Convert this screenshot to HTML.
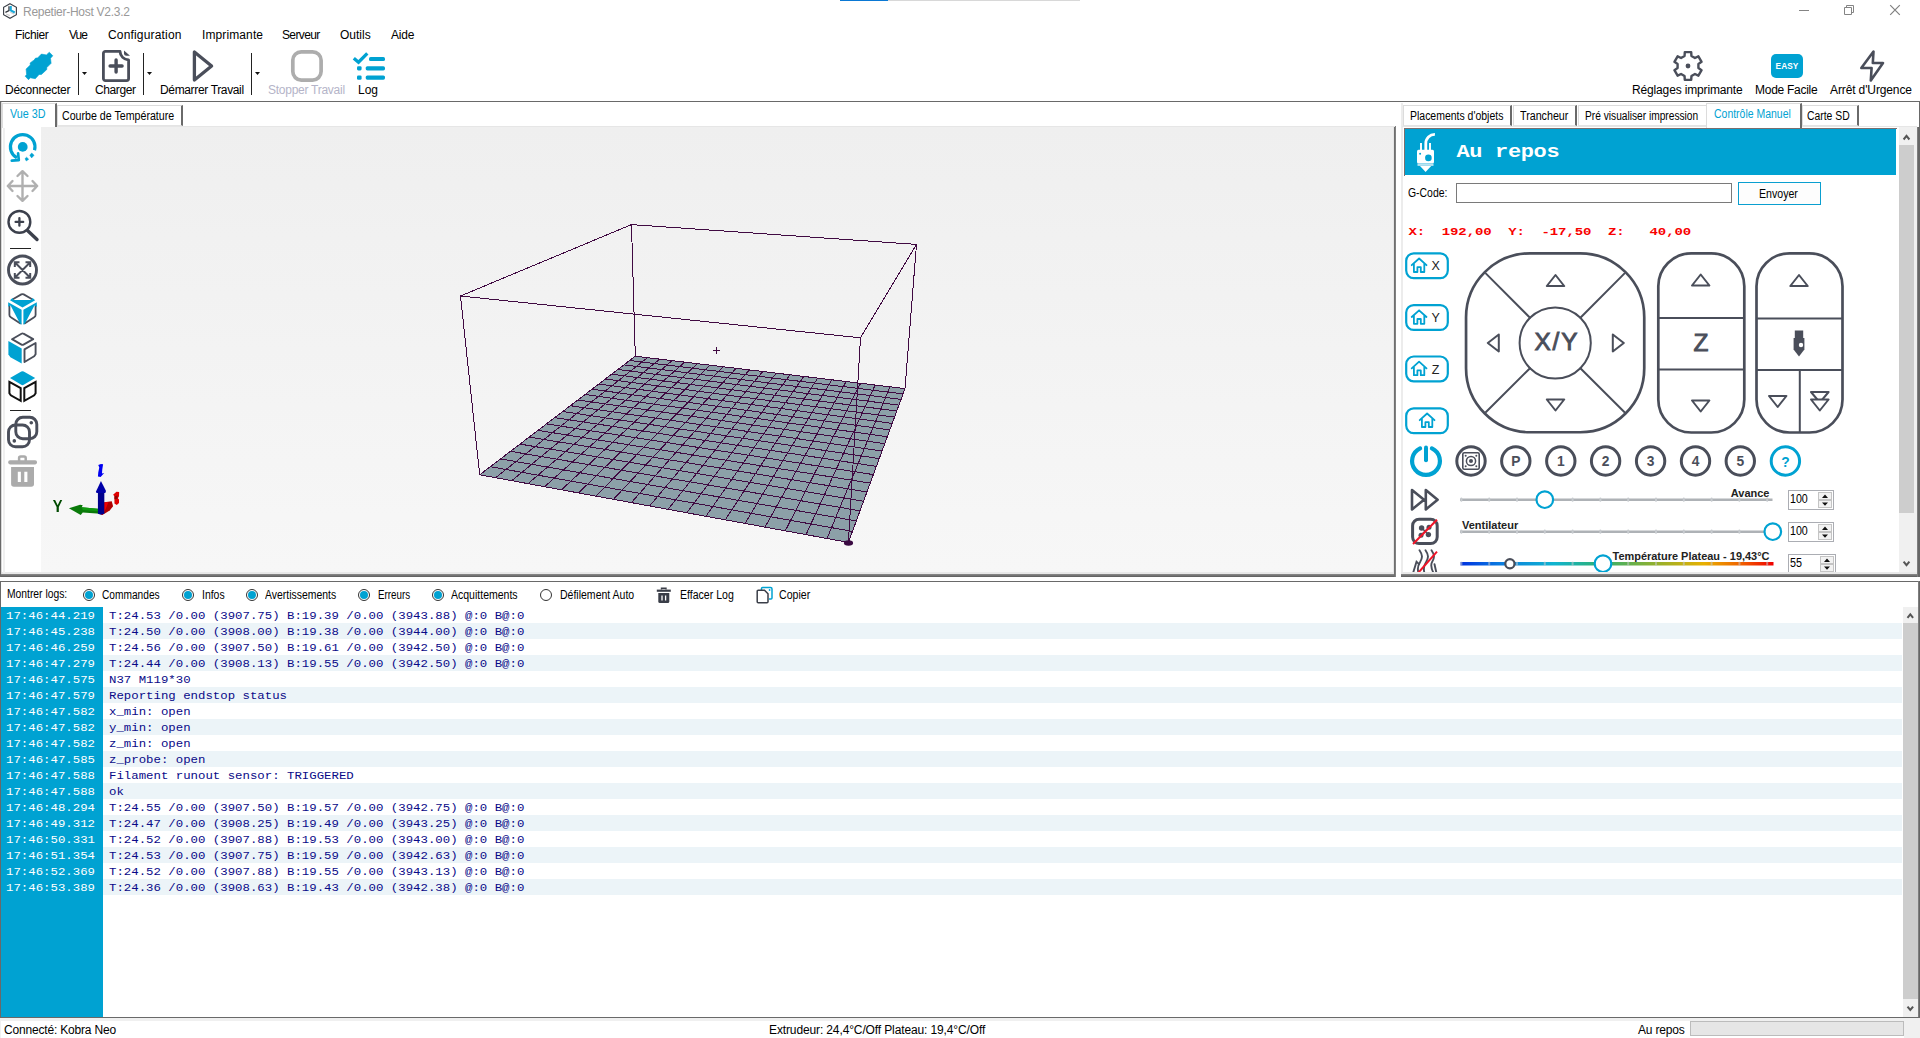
<!DOCTYPE html>
<html><head><meta charset="utf-8"><title>Repetier-Host V2.3.2</title>
<style>
*{box-sizing:border-box;margin:0;padding:0}
html,body{width:1920px;height:1038px;overflow:hidden;background:#fff}
body{position:relative;font-family:"Liberation Sans",sans-serif;font-size:12px;color:#000}
.a{position:absolute;white-space:nowrap}
.t12{font-size:12px;line-height:14px}
.ms{font-size:12.5px;line-height:14px;transform-origin:0 0}
.mono{font-family:"Liberation Mono",monospace}
.cy{color:#00a2d2}
svg{position:absolute;overflow:visible}
.ic{fill:none;stroke:#4a4e5a;stroke-width:2;stroke-linecap:round;stroke-linejoin:round}
.tab{position:absolute;background:#fff;border:1px solid #dcdcdc;border-right:2px solid #6a6a6a;border-bottom:1px solid #e4e4e4;height:21px;top:105px}
.row{position:absolute;left:103px;width:1798.5px;height:16px}
.row.alt{background:#ecf4f8}
.lt{position:absolute;left:6px;color:#fff;font-family:"Liberation Mono",monospace;font-size:12.36px;line-height:16px;white-space:nowrap;transform:translateY(0.5px) scaleY(0.84);transform-origin:0 11.5px}
.lm{position:absolute;left:109px;color:#0a0a88;font-family:"Liberation Mono",monospace;font-size:12.36px;line-height:16px;white-space:pre;transform:translateY(0.5px) scaleY(0.84);transform-origin:0 11.5px}
.nb{position:absolute;left:1788px;width:46px;height:20px;border:1px solid #abadb3;background:#fff}
.rb{position:absolute;width:12px;height:12px;border-radius:50%;border:1px solid #333;background:#fff}
.rb.on::after{content:"";position:absolute;left:1px;top:1px;width:8px;height:8px;border-radius:50%;background:#00a2d2}
</style></head><body>
<!-- title bar -->
<div class="a" style="left:840px;top:0;width:240px;height:1px;background:#d8d8d8"></div>
<div class="a" style="left:840px;top:0;width:48px;height:1px;background:#0a78d4"></div>
<svg style="left:3px;top:3px" width="15" height="16" viewBox="0 0 15 16"><path d="M7 0.7 L13.4 4.3 V11.7 L7 15.3 L0.6 11.7 V4.3 Z" fill="#fff" stroke="#3c4048" stroke-width="1.15"/><path d="M3.2 11 L6.8 12.6 M7.4 9.2 L11 11" stroke="#cfcfcf" stroke-width="1.2"/><path d="M6 3.2 V7.6 L2.4 9.4" fill="none" stroke="#30343c" stroke-width="1.3"/><path d="M7.8 3 V7.4 L11.8 9.5" fill="none" stroke="#1aa8d8" stroke-width="2"/></svg>
<div class="a t12" style="left:23px;top:5px;color:#999;letter-spacing:-0.27px">Repetier-Host V2.3.2</div>
<svg style="left:1799px;top:4px" width="12" height="12"><path d="M0 6.5 H10" stroke="#848484" stroke-width="1"/></svg>
<svg style="left:1844px;top:4px" width="12" height="12"><path d="M0.5 3.5 H7.5 V10.5 H0.5 Z M2.5 3.5 V1.5 H9.5 V8.5 H7.5" fill="none" stroke="#848484" stroke-width="1"/></svg>
<svg style="left:1889px;top:4px" width="12" height="12"><path d="M1.2 1.2 L10.8 10.8 M10.8 1.2 L1.2 10.8" stroke="#808080" stroke-width="1.2"/></svg>
<!-- menu -->
<div class="a t12" style="left:15px;top:28px;letter-spacing:-0.37px">Fichier</div>
<div class="a t12" style="left:69px;top:28px;letter-spacing:-1.05px">Vue</div>
<div class="a t12" style="left:108px;top:28px;letter-spacing:0.17px">Configuration</div>
<div class="a t12" style="left:202px;top:28px;letter-spacing:0.11px">Imprimante</div>
<div class="a t12" style="left:282px;top:28px;letter-spacing:-0.63px">Serveur</div>
<div class="a t12" style="left:340px;top:28px">Outils</div>
<div class="a t12" style="left:391px;top:28px;letter-spacing:-0.23px">Aide</div>
<!-- toolbar -->
<div class="a t12" style="left:5px;top:83px;letter-spacing:-0.26px">Déconnecter</div>
<div class="a t12" style="left:95px;top:83px;letter-spacing:-0.38px">Charger</div>
<div class="a t12" style="left:160px;top:83px;letter-spacing:-0.35px">Démarrer Travail</div>
<div class="a t12" style="left:268px;top:83px;color:#b4b4c8;letter-spacing:-0.26px">Stopper Travail</div>
<div class="a t12" style="left:358px;top:83px">Log</div>
<div class="a t12" style="left:1632px;top:83px;letter-spacing:-0.15px">Réglages imprimante</div>
<div class="a t12" style="left:1755px;top:83px;letter-spacing:-0.27px">Mode Facile</div>
<div class="a t12" style="left:1830px;top:83px;letter-spacing:-0.12px">Arrêt d'Urgence</div>
<div class="a" style="left:78px;top:53px;width:1px;height:42px;background:#222"></div>
<div class="a" style="left:143px;top:53px;width:1px;height:42px;background:#222"></div>
<div class="a" style="left:251px;top:53px;width:1px;height:42px;background:#222"></div>
<svg style="left:82px;top:72px" width="7" height="4"><path d="M0 0 H5 L2.5 3 Z" fill="#111"/></svg>
<svg style="left:147px;top:72px" width="7" height="4"><path d="M0 0 H5 L2.5 3 Z" fill="#111"/></svg>
<svg style="left:255px;top:72px" width="7" height="4"><path d="M0 0 H5 L2.5 3 Z" fill="#111"/></svg>
<!-- toolbar icons -->
<svg id="ic-disc" style="left:16px;top:46px" width="50" height="40" viewBox="0 0 50 40"><path d="M33.3 6.2 L36.8 9.8 L34.5 12.3 L35.1 17.3 L30.8 21.6 L30.8 23.5 L25.4 28.5 L23.1 28.5 L19.3 32.7 L14.3 31.8 L12.5 33.7 L9.2 30.2 L10.6 28.5 L10.1 23.1 L14.3 18.9 L14.1 17.1 L16.4 15.2 L17.9 14.3 L19.6 12.1 L21.6 11.9 L25.4 8.1 L30.4 8.9 Z" fill="#00a2d2" stroke="#00a2d2" stroke-width="0.6" stroke-linejoin="round"/></svg>
<svg id="ic-load" style="left:100px;top:48px" width="34" height="38" viewBox="0 0 34 38"><path d="M5.4 3.4 H20 A9 9 0 0 0 28.6 12 V30.6 a2 2 0 0 1 -2 2 H5.4 a2 2 0 0 1 -2 -2 V5.4 a2 2 0 0 1 2 -2 Z" fill="none" stroke="#4a4e5a" stroke-width="2.8" stroke-linejoin="round"/><path d="M16.1 12 V24 M10.1 18 H22.1" stroke="#4a4e5a" stroke-width="3.4" stroke-linecap="round"/><path d="M24 2.6 L30 7.8 H26.5 A2.5 2.5 0 0 1 24 5.3 Z" fill="#4a4e5a"/></svg>
<svg id="ic-play" style="left:190px;top:48px" width="28" height="38" viewBox="0 0 28 38"><path d="M4.4 4 V32 L21.6 18 Z" fill="none" stroke="#4a4e5a" stroke-width="3.3" stroke-linejoin="round"/></svg>
<svg id="ic-stop" style="left:289px;top:48px" width="36" height="36" viewBox="0 0 36 36"><rect x="3.8" y="3.8" width="28.3" height="28.3" rx="8.5" fill="none" stroke="#adadad" stroke-width="3.7"/></svg>
<svg id="ic-log" style="left:350px;top:48px" width="38" height="36" viewBox="0 0 38 36"><path d="M3.8 10.2 L8.5 14.2 L17.3 5.4" fill="none" stroke="#00a2d2" stroke-width="3.3"/><g fill="#00a2d2"><rect x="19" y="9" width="16" height="4.1" rx="1.6"/><rect x="15.7" y="18.2" width="19.3" height="4.2" rx="1.6"/><rect x="15.7" y="27.4" width="19.3" height="4.3" rx="1.6"/><rect x="7" y="18.2" width="4.6" height="4.2" rx="1.3"/><rect x="7" y="27.4" width="4.6" height="4.3" rx="1.3"/></g></svg>
<svg id="ic-gear" style="left:1670px;top:48px" width="36" height="36" viewBox="0 0 36 36"><path d="M14.55 7.98 L14.81 4.16 L21.19 4.16 L21.45 7.98 L24.95 10.00 L28.39 8.32 L31.58 13.85 L28.41 15.98 L28.41 20.02 L31.58 22.15 L28.39 27.68 L24.95 26.00 L21.45 28.02 L21.19 31.84 L14.81 31.84 L14.55 28.02 L11.05 26.00 L7.61 27.68 L4.42 22.15 L7.59 20.02 L7.59 15.98 L4.42 13.85 L7.61 8.32 L11.05 10.00 Z" fill="none" stroke="#4a4e5a" stroke-width="2.4" stroke-linejoin="round"/><circle cx="18" cy="18" r="2.4" fill="#4a4e5a"/></svg>
<div class="a" style="left:1771px;top:54px;width:32px;height:24px;border-radius:5px;background:#00a2d2"></div>
<div class="a" style="left:1771px;top:61px;width:32px;text-align:center;color:#fff;font-size:8.3px;font-weight:bold;line-height:10px;letter-spacing:0.1px">EASY</div>
<svg id="ic-bolt" style="left:1856px;top:46px" width="32" height="40" viewBox="0 0 32 40"><path d="M17.5 5.5 L5.3 22 H15.6 L14.8 34.5 L27 17 H16.8 Z" fill="none" stroke="#4a4e5a" stroke-width="2.6" stroke-linejoin="round"/></svg>
<div class="a" style="left:0;top:101px;width:1920px;height:1px;background:#696969"></div>
<!-- left panel -->
<div class="a" style="left:0;top:101px;width:1px;height:476px;background:#696969"></div>
<div class="a" style="left:1px;top:102px;width:1px;height:472px;background:#d8d8d8"></div>
<div class="a" style="left:2px;top:572px;width:1392px;height:2px;background:#e9e9e9"></div>
<div class="a" style="left:1px;top:574px;width:1395px;height:3px;background:linear-gradient(#8c8c8c,#5c5c5c)"></div>
<div class="a" style="left:1393px;top:127px;width:1px;height:447px;background:#e6e6e6"></div><div class="a" style="left:1394px;top:126px;width:2px;height:451px;background:linear-gradient(90deg,#666,#8a8a8a)"></div>
<!-- tabs left -->
<div class="a" style="left:2px;top:126px;width:1393px;height:1px;background:#e6e6e6"></div>
<div class="tab" style="left:57px;width:126px"></div><div class="a ms" style="left:61.9px;transform:scaleX(0.8513);top:109px">Courbe de Température</div>
<div class="tab" style="left:2px;top:103px;width:55px;height:25px;border-bottom:none"></div><div class="a ms cy" style="left:10.4px;transform:scaleX(0.8621);top:107px">Vue 3D</div>
<div class="a" style="left:3px;top:128px;width:2px;height:445px;background:#f0f0f0"></div>
<!-- 3d view -->
<div class="a" id="view3d" style="left:41px;top:127px;width:1352px;height:445px;background:linear-gradient(#efefef,#f7f7f7);overflow:hidden">
<svg class="v3d" width="1354" height="447" viewBox="0 0 1354 447" shape-rendering="crispEdges">
<path d="M594.3 229.2 L864.0 261.6 L807.4 415.4 L438.7 347.8 Z" fill="#8ca0a8"/>
<path d="M594.3 229.2 L438.7 347.8 M594.3 229.2 L864.0 261.6 M606.4 230.7 L454.6 350.7 M588.7 233.5 L862.0 266.9 M618.7 232.1 L470.7 353.7 M582.8 237.9 L860.0 272.4 M631.1 233.6 L487.0 356.7 M576.9 242.5 L857.9 278.1 M643.7 235.1 L503.6 359.7 M570.7 247.2 L855.7 284.0 M656.3 236.7 L520.5 362.8 M564.3 252.0 L853.5 290.1 M669.1 238.2 L537.6 365.9 M557.8 257.0 L851.2 296.4 M682.1 239.7 L554.9 369.1 M551.0 262.2 L848.8 302.9 M695.2 241.3 L572.5 372.3 M544.0 267.5 L846.3 309.7 M708.4 242.9 L590.4 375.6 M536.8 273.0 L843.7 316.7 M721.8 244.5 L608.6 379.0 M529.4 278.7 L841.0 324.0 M735.3 246.1 L627.1 382.3 M521.7 284.5 L838.3 331.6 M749.0 247.8 L645.9 385.8 M513.7 290.6 L835.4 339.4 M762.8 249.4 L664.9 389.3 M505.5 296.9 L832.4 347.6 M776.7 251.1 L684.3 392.8 M497.0 303.4 L829.2 356.1 M790.9 252.8 L704.0 396.4 M488.1 310.1 L826.0 364.9 M805.2 254.5 L724.0 400.1 M479.0 317.1 L822.6 374.2 M819.6 256.3 L744.3 403.8 M469.5 324.3 L819.0 383.8 M834.2 258.0 L765.0 407.6 M459.6 331.9 L815.3 393.9 M849.0 259.8 L786.0 411.5 M449.4 339.7 L811.5 404.4 M864.0 261.6 L807.4 415.4 M438.7 347.8 L807.4 415.4" fill="none" stroke="#400a42" stroke-width="1"/>
<path d="M590.5 97.6 L875.5 117.4 L819.5 210.8 L419.5 169.0 Z M594.3 229.2 L590.5 97.6 M864.0 261.6 L875.5 117.4 M807.4 415.4 L819.5 210.8 M438.7 347.8 L419.5 169.0" fill="none" stroke="#400a42" stroke-width="1"/>
<ellipse cx="807.5" cy="416" rx="4.6" ry="2.8" fill="#3a0a42" shape-rendering="geometricPrecision"/>
<path d="M672 223.5 h7 M675.5 220 v7" stroke="#400a42" stroke-width="1"/>
</svg><svg id="gizmo" style="left:4px;top:328px" width="90" height="70" viewBox="0 0 1335 1038">
<path d="M118 668 L150 668 L188 745 L225 668 L255 668 L205 770 L205 845 L172 845 L172 770 Z" fill="#004a00"/>
<path d="M355 790 L520 738 L560 745 L545 775 L820 800 L820 872 L560 852 L530 890 Z" fill="#0a7a0a"/>
<path d="M545 775 L820 800 L820 835 L560 815 Z" fill="#0f9a0f"/>
<path d="M880 700 L990 685 L1010 760 L960 822 L850 888 L820 872 L820 800 Z" fill="#b00000"/>
<path d="M880 700 L940 700 L900 800 L850 888 L820 872 Z" fill="#f00000"/>
<path d="M1010 590 L1060 545 L1100 548 L1098 610 L1080 640 L1098 660 L1098 710 L1065 740 L1030 720 L1030 610 Z" fill="#e00000"/>
<path d="M1030 610 L1075 600 L1075 650 L1030 655 Z" fill="#900000"/>
<path d="M785 550 L880 550 L880 870 L830 885 L785 870 Z" fill="#00008c"/>
<path d="M830 385 L905 535 L895 565 L765 565 L755 545 Z" fill="#0000a8"/>
<path d="M790 150 L830 133 L862 138 L850 210 L845 275 L878 268 L825 325 L785 318 L790 260 L805 185 Z" fill="#0000f0"/>
</svg>
</div>
<!-- left tool icons -->
<svg id="t-rot" style="left:4px;top:128px" width="40" height="40" viewBox="0 0 40 40"><path d="M30.52 22.29 A12.3 12.3 0 1 0 12.93 29.76" fill="none" stroke="#00a2d2" stroke-width="3.2"/><circle cx="18.7" cy="18.9" r="4.9" fill="#00a2d2"/><path d="M14.1 25.4 L14.8 32.2 L7.8 32.7" fill="none" stroke="#00a2d2" stroke-width="2.7" stroke-linecap="round" stroke-linejoin="round"/><path d="M27.7 25 L30.1 27.3 L27.6 29.9 L25.8 27.2 Z M22.6 29.2 L24.7 31.2 L22.3 33 L21 30.7 Z" fill="#00a2d2" stroke="#00a2d2" stroke-width="0.5" stroke-linejoin="round"/></svg>
<svg id="t-move" style="left:7px;top:170px" width="32" height="32" viewBox="0 0 32 32"><path d="M15.5 1.5 V30.5 M1 16 H30 M10.5 6 L15.5 1.2 L20.5 6 M10.5 26 L15.5 30.8 L20.5 26 M5.5 11 L0.8 16 L5.5 21 M25.5 11 L30.2 16 L25.5 21" fill="none" stroke="#b0b0b0" stroke-width="2.4" stroke-linecap="round" stroke-linejoin="round"/></svg>
<svg id="t-zoom" style="left:6px;top:208px" width="34" height="34" viewBox="0 0 34 34"><circle cx="13.4" cy="13.9" r="10.9" fill="none" stroke="#3c404c" stroke-width="2.4"/><path d="M21.5 22.5 L31 31.5" stroke="#3c404c" stroke-width="3.4" stroke-linecap="round"/><path d="M9.6 13.9 H17.2 M13.4 10.1 V17.7" stroke="#3c404c" stroke-width="2.3" stroke-linecap="round"/></svg>
<div class="a" style="left:10px;top:248px;width:21px;height:1px;background:#222"></div>
<svg id="t-fit" style="left:6px;top:254px" width="33" height="33" viewBox="0 0 33 33"><circle cx="16.5" cy="16" r="14" fill="none" stroke="#4a4e5a" stroke-width="2.9"/><path d="M9 8.5 L24 23.5 M24 8.5 L9 23.5 M8.8 13 V8.3 H13.5 M19.5 8.3 H24.2 V13 M24.2 19 V23.7 H19.5 M13.5 23.7 H8.8 V19" fill="none" stroke="#4a4e5a" stroke-width="2"/></svg>
<svg id="t-c1" style="left:4px;top:290px" width="40" height="40" viewBox="0 0 40 40"><g fill="none" stroke="#4a4e5a" stroke-width="1.8" stroke-linejoin="round" stroke-linecap="round"><path d="M9.3 9 L17.3 4.4 Q18.5 3.7 19.7 4.4 L27.7 9"/><path d="M5.4 16 V25 Q5.4 26.5 6.8 27.3 L16.4 33.4"/><path d="M31.6 16 V25 Q31.6 26.5 30.2 27.3 L20.6 33.4"/></g><g fill="#00a2d2"><path d="M6 10.2 L8.5 8 L9.7 9.9 H27.3 L28.6 8 L31.2 10.2 L18.5 17.4 Z"/><path d="M4.2 12.3 L17.6 19.7 V34.8 L16 33.5 L6.6 15.6 L4.2 16.8 Z"/><path d="M32.8 12.3 L19.4 19.7 V34.8 L21 33.5 L30.4 15.6 L32.8 16.8 Z"/></g></svg>
<svg id="t-c2" style="left:4px;top:328px" width="40" height="40" viewBox="0 0 40 40"><path d="M4.4 13.1 L17.7 20.4 V35.6 L6.4 29.3 L4.4 26.6 Z" fill="#00a2d2"/><g fill="none" stroke="#4a4e5a" stroke-width="1.9" stroke-linejoin="round"><path d="M8 11.2 L17.5 5.7 Q18.5 5.1 19.5 5.7 L29.2 11.2 L19.5 16.6 Q18.5 17.2 17.5 16.6 Z"/><path d="M20.5 21.4 L31.6 15 V26.3 L30.2 28.3 L20.5 34 Z"/></g></svg>
<svg id="t-c3" style="left:4px;top:366px" width="40" height="40" viewBox="0 0 40 40"><path d="M6 12.1 L17.3 5.6 Q18.5 4.9 19.7 5.6 L31.2 12.1 L19.7 18.8 Q18.5 19.5 17.3 18.8 Z" fill="#00a2d2"/><g fill="none" stroke="#111" stroke-width="2" stroke-linejoin="miter"><path d="M5.4 15.9 L16.7 22.2 V34.8 L6.8 29.3 L5.4 27.3 Z"/><path d="M31.6 15.9 L20.3 22.2 V34.8 L30.2 29.3 L31.6 27.3 Z"/></g></svg>
<div class="a" style="left:10px;top:410px;width:21px;height:1px;background:#222"></div>
<svg id="t-copy" style="left:2px;top:412px" width="42" height="40" viewBox="0 0 42 40"><g fill="none" stroke="#4a4e5a" stroke-width="2.9"><rect x="13.8" y="5.3" width="21" height="21.4" rx="7"/><rect x="6.5" y="13" width="21" height="21.8" rx="7"/></g><circle cx="29.3" cy="10.8" r="1.8" fill="#4a4e5a"/><circle cx="12.3" cy="28.9" r="1.8" fill="#4a4e5a"/></svg>
<svg id="t-trash" style="left:2px;top:452px" width="42" height="40" viewBox="0 40 42 40"><path d="M17.1 49 V46 a1.6 1.6 0 0 1 1.6 -1.6 h3.4 a1.6 1.6 0 0 1 1.6 1.6 V49" fill="none" stroke="#ababab" stroke-width="2.5"/><rect x="6.2" y="48.2" width="28.8" height="4.2" rx="1.8" fill="#ababab"/><path d="M9.1 55.1 H32 V72 a2.8 2.8 0 0 1 -2.8 2.8 H11.9 a2.8 2.8 0 0 1 -2.8 -2.8 Z" fill="#ababab"/><path d="M15.8 59.7 H18.9 V70.1 H15.8 Z M22.3 59.7 H25.4 V70.1 H22.3 Z" fill="#fff"/></svg>
<!-- right panel -->
<div class="a" style="left:1399px;top:102px;width:1px;height:474px;background:#fff"></div>
<div class="a" style="left:1401px;top:103px;width:2px;height:471px;background:#ececec"></div>
<div class="a" style="left:1402px;top:126px;width:515px;height:1px;background:#e6e6e6"></div>
<div class="a" style="left:1401px;top:574px;width:519px;height:3px;background:linear-gradient(#8c8c8c,#5c5c5c)"></div>
<div class="a" style="left:1919px;top:101px;width:1px;height:476px;background:#696969"></div><div class="a" style="left:1917px;top:127px;width:3px;height:450px;background:linear-gradient(90deg,#8a8a8a,#666 50%)"></div>
<div class="tab" style="left:1403px;width:109px"></div><div class="a ms" style="left:1409.5px;transform:scaleX(0.8378);top:109px">Placements d'objets</div>
<div class="tab" style="left:1513px;width:64px"></div><div class="a ms" style="left:1520.0px;transform:scaleX(0.8564);top:109px">Trancheur</div>
<div class="tab" style="left:1578px;width:130px"></div><div class="a ms" style="left:1584.5px;transform:scaleX(0.8148);top:109px">Pré visualiser impression</div>
<div class="tab" style="left:1802px;width:57px"></div><div class="a ms" style="left:1807.0px;transform:scaleX(0.8306);top:109px">Carte SD</div>
<div class="tab" style="left:1706px;top:103px;width:96px;height:25px;border-bottom:none"></div><div class="a ms cy" style="left:1714.2px;transform:scaleX(0.8373);top:107px">Contrôle Manuel</div>
<!-- header -->
<div class="a" style="left:1404px;top:128px;width:493px;height:48px;border-left:1px solid #7a6f6f;border-top:1px solid #7a6f6f"></div>
<div class="a" style="left:1405px;top:129px;width:491px;height:46px;background:#00a2d2"></div>
<svg id="hd-ext" style="left:1414px;top:130px" width="24" height="44" viewBox="0 0 24 44"><path d="M11.8 20 V13.5 A9 9 0 0 1 20.9 4.4" fill="none" stroke="#fff" stroke-width="2.8"/><path d="M7 13 V20 M16 13 V20" stroke="#fff" stroke-width="1.9"/><rect x="3" y="19.8" width="17" height="13.8" rx="1.5" fill="#fff"/><rect x="3.5" y="33.6" width="16" height="2.3" fill="#b8e4f2"/><path d="M6 35.9 H17.2 L11.6 42 Z" fill="#fff"/><circle cx="14.4" cy="27.9" r="3.3" fill="#00a2d2"/><circle cx="6.1" cy="23.7" r="1" fill="#00a2d2"/></svg>
<div class="a mono" id="aurepos" style="left:1456.5px;top:140px;font-size:22px;line-height:24px;font-weight:bold;color:#fff;letter-spacing:-0.35px;transform:scaleY(0.8);transform-origin:0 17.9px">Au repos</div>
<!-- gcode -->
<div class="a ms" style="left:1408.3px;transform:scaleX(0.8339);top:186px">G-Code:</div>
<div class="a" style="left:1456px;top:183px;width:276px;height:20px;border:1px solid #7a7a7a;background:#fff"></div>
<div class="a" style="left:1738px;top:182px;width:83px;height:23px;border:1px solid #0a9fd0;background:#fdfdfd"></div>
<div class="a ms" style="left:1758.8px;transform:scaleX(0.8482);top:187px">Envoyer</div>
<div class="a mono" id="coords" style="left:1408.5px;top:223px;font-size:14px;line-height:16px;font-weight:bold;color:#f80000;white-space:pre;letter-spacing:-0.09px;transform:scaleY(0.82);transform-origin:0 11.8px">X:  192,00  Y:  -17,50  Z:   40,00</div>
<!-- home buttons -->
<svg id="pads" style="left:1400px;top:240px" width="460" height="200" viewBox="0 0 460 200">
<defs><path id="home" d="M1.2 8.2 L8.6 1.5 L16 8.2 M3.4 6.8 V15 H6.9 V10.2 H10.3 V15 H13.8 V6.8" fill="none" stroke="#00a2d2" stroke-width="1.8" stroke-linejoin="round" stroke-linecap="round"/></defs>
<g fill="#fff" stroke="#00a2d2" stroke-width="2.2">
<rect x="6.2" y="13.3" width="41.6" height="24.8" rx="7.5"/><rect x="6.2" y="65.1" width="41.6" height="24.8" rx="7.5"/><rect x="6.2" y="116.5" width="41.6" height="24.8" rx="7.5"/><rect x="6.2" y="168.3" width="41.6" height="24.8" rx="7.5"/></g>
<use href="#home" x="10.5" y="17"/><use href="#home" x="10.5" y="68.8"/><use href="#home" x="10.5" y="120.2"/><use href="#home" x="18.5" y="172"/>
<g font-family="Liberation Sans, sans-serif" font-size="12.5" fill="#222"><text x="31.5" y="30.3">X</text><text x="31.5" y="82.1">Y</text><text x="31.8" y="133.5">Z</text></g>
<!-- XY pad -->
<g fill="none" stroke="#4a4e5a" stroke-linejoin="round" stroke-linecap="round">
<rect x="66.05" y="13.35" width="178.2" height="178.9" rx="64" stroke-width="2.7"/>
<circle cx="155.2" cy="103" r="35.6" stroke-width="2"/>
<path d="M86 33.6 L130 77.8 M224.3 33.6 L180.4 77.8 M86 172 L130 128.2 M224.3 172 L180.4 128.2" stroke-width="2"/>
<path d="M146.8 46 L155.5 35 L164.2 46 Z M146.8 159.5 L155.5 170.5 L164.2 159.5 Z M98.8 94.5 L87.8 103 L98.8 111.5 Z M212.8 94.5 L223.8 103 L212.8 111.5 Z" stroke-width="2"/>
<!-- Z pad -->
<rect x="258.3" y="13.3" width="86" height="179.2" rx="33" stroke-width="2.7"/>
<path d="M259 78 H343.5 M259 129.4 H343.5" stroke-width="2"/>
<path d="M292 45.5 L300.7 34.5 L309.4 45.5 Z M292 160.5 L300.7 171.5 L309.4 160.5 Z" stroke-width="2"/>
<!-- E pad -->
<rect x="356.5" y="13.3" width="86" height="179.2" rx="33" stroke-width="2.7"/>
<path d="M357 78.5 H442 M357 130 H442 M399.8 130 V192" stroke-width="2"/>
<path d="M390.3 46 L399 35 L407.7 46 Z M369 156 L377.7 167 L386.4 156 Z M411 152 H428.6 L419.8 162.5 Z" stroke-width="2"/><path d="M411 159.5 L419.8 170.5 L428.6 159.5 Z" stroke-width="2" fill="#fff"/>
</g>
<g font-family="Liberation Sans, sans-serif" fill="#4a4e5a" text-anchor="middle"><text x="156" y="110.4" font-size="24.4" stroke="#4a4e5a" stroke-width="0.9" textLength="43" lengthAdjust="spacing">X/Y</text><text x="301" y="110.6" font-size="24.4" stroke="#4a4e5a" stroke-width="0.9">Z</text></g>
<g fill="#4a4e5a"><rect x="394.8" y="90.5" width="8.4" height="7.5"/><path d="M393.6 98 H404.4 V109.5 L399 116.5 L393.6 109.5 Z"/><circle cx="401" cy="105" r="2.2" fill="#fff"/></g>
</svg>
<!-- circle buttons row -->
<svg id="circ" style="left:1405px;top:440px" width="420" height="42" viewBox="0 0 420 42">
<g fill="none" stroke="#00a2d2" stroke-width="4.2" stroke-linecap="round"><path d="M15.1 8.4 A13.9 13.9 0 1 0 26.9 8.4"/><path d="M21 7.4 V20.3" stroke-width="4"/></g>
<g fill="none" stroke="#4a4e5a" stroke-width="3"><circle cx="66" cy="21" r="14.2"/><circle cx="110.8" cy="21" r="14.2"/><circle cx="155.8" cy="21" r="14.2"/><circle cx="200.6" cy="21" r="14.2"/><circle cx="245.6" cy="21" r="14.2"/><circle cx="290.5" cy="21" r="14.2"/><circle cx="335.3" cy="21" r="14.2"/></g>
<circle cx="380.4" cy="21" r="14.2" fill="none" stroke="#00a2d2" stroke-width="3"/>
<g fill="none" stroke="#4a4e5a"><rect x="57.8" y="12.8" width="16.4" height="16.4" rx="1.5" stroke-width="1.6"/><circle cx="66" cy="21" r="4.6" stroke-width="1.5"/><circle cx="66" cy="21" r="2" fill="#4a4e5a" stroke="none"/></g>
<g fill="#4a4e5a"><circle cx="60.7" cy="15.7" r="1"/><circle cx="71.3" cy="15.7" r="1"/><circle cx="60.7" cy="26.3" r="1"/><circle cx="71.3" cy="26.3" r="1"/></g>
<g font-family="Liberation Sans, sans-serif" font-size="13.8" font-weight="bold" fill="#4a4e5a" text-anchor="middle"><text x="110.8" y="26">P</text><text x="155.8" y="26">1</text><text x="200.6" y="26">2</text><text x="245.6" y="26">3</text><text x="290.5" y="26">4</text><text x="335.3" y="26">5</text><text x="380.4" y="26.5" fill="#00a2d2">?</text></g>
</svg>
<!-- sliders -->
<svg id="sliders" style="left:1405px;top:484px;overflow:hidden" width="440" height="90" viewBox="0 -0.2 440 90">
<defs><linearGradient id="tg" gradientUnits="userSpaceOnUse" x1="55" x2="368" y1="0" y2="0"><stop offset="0" stop-color="#0030e0"/><stop offset="0.12" stop-color="#0a78e0"/><stop offset="0.3" stop-color="#10b4d0"/><stop offset="0.45" stop-color="#30b070"/><stop offset="0.62" stop-color="#90b030"/><stop offset="0.78" stop-color="#e8b000"/><stop offset="0.9" stop-color="#f06000"/><stop offset="1" stop-color="#f00000"/></linearGradient></defs>
<!-- row1 -->
<path d="M7 5.8 L19 15.5 L7 25.2 Z M20.8 5.8 L32.6 15.5 L20.8 25.2 Z" fill="none" stroke="#4a4e5a" stroke-width="2.6" stroke-linejoin="round"/>
<path d="M55 15.5 H367.5" stroke="#aeb2b6" stroke-width="2.6"/>
<path d="M55 47.5 H367.5" stroke="#aeb2b6" stroke-width="2.6"/>
<path d="M55.5 79.5 H368.5" stroke="url(#tg)" stroke-width="3.4"/>
<g fill="#c6cace" id="tk"><rect x="55.4" y="13.4" width="2" height="4.2" rx="1"/><rect x="83.2" y="13.4" width="2" height="4.2" rx="1"/><rect x="111.0" y="13.4" width="2" height="4.2" rx="1"/><rect x="138.8" y="13.4" width="2" height="4.2" rx="1"/><rect x="166.6" y="13.4" width="2" height="4.2" rx="1"/><rect x="194.4" y="13.4" width="2" height="4.2" rx="1"/><rect x="222.2" y="13.4" width="2" height="4.2" rx="1"/><rect x="250.0" y="13.4" width="2" height="4.2" rx="1"/><rect x="277.8" y="13.4" width="2" height="4.2" rx="1"/><rect x="305.6" y="13.4" width="2" height="4.2" rx="1"/><rect x="333.4" y="13.4" width="2" height="4.2" rx="1"/><rect x="361.2" y="13.4" width="2" height="4.2" rx="1"/></g>
<use href="#tk" y="32"/><use href="#tk" y="64" opacity="0.55"/>
<circle cx="139.8" cy="15.5" r="8.3" fill="#fff" stroke="#00a2d2" stroke-width="2.2"/>
<circle cx="367.8" cy="47.5" r="8.3" fill="#fff" stroke="#00a2d2" stroke-width="2.2"/>
<circle cx="104.9" cy="79.5" r="4.6" fill="#fff" stroke="#4a4e5a" stroke-width="2.2"/>
<circle cx="198" cy="79.5" r="8.3" fill="#fff" stroke="#00a2d2" stroke-width="2.2"/>
<!-- fan icon -->
<rect x="7.6" y="35" width="24.6" height="24.4" rx="6.5" fill="none" stroke="#4a4e5a" stroke-width="3"/>
<g fill="#4a4e5a"><circle cx="16.6" cy="43.8" r="2.7"/><circle cx="24" cy="43" r="2.5"/><circle cx="16" cy="51" r="2.5"/><circle cx="23.4" cy="50.4" r="2.7"/><path d="M17 44 L23 50 M23.5 43.5 L16.5 50.5" stroke="#4a4e5a" stroke-width="1.6"/></g>
<path d="M8 59.8 L32 35.5" stroke="#f01428" stroke-width="2"/>
<!-- bed heat icon -->
<g fill="none" stroke="#4a4e5a" stroke-width="1.9" stroke-linecap="round"><path d="M14.5 66 C18 71 17.5 74 15 78 C13 81 12 84 13.5 89"/><path d="M20.5 66 C24 71 23.5 74 21 78 C19 81 18 84 19.5 89"/><path d="M26.5 66 C30 71 29.5 74 27 78 C25.5 81 26 84 28.5 89"/><path d="M8 89 L11.5 77.5 L14 80 M31.5 89 L29.5 80"/></g>
<path d="M12 90 L32 67.5" stroke="#f01428" stroke-width="2"/>
<g font-family="Liberation Sans, sans-serif" font-size="11" font-weight="bold" fill="#222"><text x="364.5" y="12.6" text-anchor="end">Avance</text><text x="57" y="44.5">Ventilateur</text><text x="364.5" y="76" text-anchor="end" textLength="157" lengthAdjust="spacingAndGlyphs">Température Plateau - 19,43°C</text></g>
</svg>
<!-- numeric boxes -->
<div class="nb" style="top:490px"></div><div class="nb" style="top:522px"></div><div class="nb" style="top:554px;width:48px"></div>
<div class="a ms" style="left:1790.3px;transform:scaleX(0.8533);top:492px">100</div>
<div class="a ms" style="left:1790.3px;transform:scaleX(0.8533);top:524px">100</div>
<div class="a ms" style="left:1789.7px;transform:scaleX(0.8629);top:556px">55</div>
<svg style="left:1818px;top:492px" width="15" height="16"><rect x="0.5" y="0.5" width="13" height="7" fill="#f2f2f2" stroke="#c4c4c4"/><rect x="0.5" y="8.5" width="13" height="7" fill="#f2f2f2" stroke="#c4c4c4"/><path d="M4 6 L7 2.6 L10 6 Z M4 10.4 L7 13.8 L10 10.4 Z" fill="#111"/></svg>
<svg style="left:1818px;top:524px" width="15" height="16"><rect x="0.5" y="0.5" width="13" height="7" fill="#f2f2f2" stroke="#c4c4c4"/><rect x="0.5" y="8.5" width="13" height="7" fill="#f2f2f2" stroke="#c4c4c4"/><path d="M4 6 L7 2.6 L10 6 Z M4 10.4 L7 13.8 L10 10.4 Z" fill="#111"/></svg>
<svg style="left:1820px;top:556px" width="15" height="16"><rect x="0.5" y="0.5" width="13" height="7" fill="#f2f2f2" stroke="#c4c4c4"/><rect x="0.5" y="8.5" width="13" height="7" fill="#f2f2f2" stroke="#c4c4c4"/><path d="M4 6 L7 2.6 L10 6 Z M4 10.4 L7 13.8 L10 10.4 Z" fill="#111"/></svg>
<!-- right panel scrollbar -->
<div class="a" style="left:1899px;top:127px;width:18px;height:447px;background:#f0f0f0"></div>
<div class="a" style="left:1899px;top:145px;width:15px;height:368px;background:#cdcdcd"></div>
<svg style="left:1901px;top:133px" width="11" height="8"><path d="M2.6 6.5 L5.5 2.9 L8.4 6.5" fill="none" stroke="#555" stroke-width="2"/></svg>
<svg style="left:1901px;top:560px" width="11" height="8"><path d="M2.6 1.6 L5.5 5.2 L8.4 1.6" fill="none" stroke="#555" stroke-width="2"/></svg>

<div class="a" style="left:1401px;top:572px;width:516px;height:2px;background:#e9e9e9"></div>
<!-- log pane -->
<div class="a" style="left:0;top:581px;width:1920px;height:1px;background:#696969"></div>
<div class="a" style="left:0;top:581px;width:1px;height:438px;background:#696969"></div>
<div class="a" style="left:1px;top:607px;width:102px;height:410px;background:#00a2d2"></div>
<div class="row" style="top:607px"></div><div class="lt" style="top:607px">17:46:44.219</div><div class="lm" style="top:607px">T:24.53 /0.00 (3907.75) B:19.39 /0.00 (3943.88) @:0 B@:0</div>
<div class="row alt" style="top:623px"></div><div class="lt" style="top:623px">17:46:45.238</div><div class="lm" style="top:623px">T:24.50 /0.00 (3908.00) B:19.38 /0.00 (3944.00) @:0 B@:0</div>
<div class="row" style="top:639px"></div><div class="lt" style="top:639px">17:46:46.259</div><div class="lm" style="top:639px">T:24.56 /0.00 (3907.50) B:19.61 /0.00 (3942.50) @:0 B@:0</div>
<div class="row alt" style="top:655px"></div><div class="lt" style="top:655px">17:46:47.279</div><div class="lm" style="top:655px">T:24.44 /0.00 (3908.13) B:19.55 /0.00 (3942.50) @:0 B@:0</div>
<div class="row" style="top:671px"></div><div class="lt" style="top:671px">17:46:47.575</div><div class="lm" style="top:671px">N37 M119*30</div>
<div class="row alt" style="top:687px"></div><div class="lt" style="top:687px">17:46:47.579</div><div class="lm" style="top:687px">Reporting endstop status</div>
<div class="row" style="top:703px"></div><div class="lt" style="top:703px">17:46:47.582</div><div class="lm" style="top:703px">x_min: open</div>
<div class="row alt" style="top:719px"></div><div class="lt" style="top:719px">17:46:47.582</div><div class="lm" style="top:719px">y_min: open</div>
<div class="row" style="top:735px"></div><div class="lt" style="top:735px">17:46:47.582</div><div class="lm" style="top:735px">z_min: open</div>
<div class="row alt" style="top:751px"></div><div class="lt" style="top:751px">17:46:47.585</div><div class="lm" style="top:751px">z_probe: open</div>
<div class="row" style="top:767px"></div><div class="lt" style="top:767px">17:46:47.588</div><div class="lm" style="top:767px">Filament runout sensor: TRIGGERED</div>
<div class="row alt" style="top:783px"></div><div class="lt" style="top:783px">17:46:47.588</div><div class="lm" style="top:783px">ok</div>
<div class="row" style="top:799px"></div><div class="lt" style="top:799px">17:46:48.294</div><div class="lm" style="top:799px">T:24.55 /0.00 (3907.50) B:19.57 /0.00 (3942.75) @:0 B@:0</div>
<div class="row alt" style="top:815px"></div><div class="lt" style="top:815px">17:46:49.312</div><div class="lm" style="top:815px">T:24.47 /0.00 (3908.25) B:19.49 /0.00 (3943.25) @:0 B@:0</div>
<div class="row" style="top:831px"></div><div class="lt" style="top:831px">17:46:50.331</div><div class="lm" style="top:831px">T:24.52 /0.00 (3907.88) B:19.53 /0.00 (3943.00) @:0 B@:0</div>
<div class="row alt" style="top:847px"></div><div class="lt" style="top:847px">17:46:51.354</div><div class="lm" style="top:847px">T:24.53 /0.00 (3907.75) B:19.59 /0.00 (3942.63) @:0 B@:0</div>
<div class="row" style="top:863px"></div><div class="lt" style="top:863px">17:46:52.369</div><div class="lm" style="top:863px">T:24.52 /0.00 (3907.88) B:19.55 /0.00 (3943.13) @:0 B@:0</div>
<div class="row alt" style="top:879px"></div><div class="lt" style="top:879px">17:46:53.389</div><div class="lm" style="top:879px">T:24.36 /0.00 (3908.63) B:19.43 /0.00 (3942.38) @:0 B@:0</div>
<div class="a ms" style="left:7.0px;transform:scaleX(0.8252);top:587px">Montrer logs:</div>
<div class="rb on" style="left:83px;top:589px"></div>
<div class="a ms" style="left:102.0px;transform:scaleX(0.8141);top:588px">Commandes</div>
<div class="rb on" style="left:182px;top:589px"></div>
<div class="a ms" style="left:201.5px;transform:scaleX(0.8337);top:588px">Infos</div>
<div class="rb on" style="left:246px;top:589px"></div>
<div class="a ms" style="left:265.1px;transform:scaleX(0.8343);top:588px">Avertissements</div>
<div class="rb on" style="left:358px;top:589px"></div>
<div class="a ms" style="left:378.0px;transform:scaleX(0.7832);top:588px">Erreurs</div>
<div class="rb on" style="left:432px;top:589px"></div>
<div class="a ms" style="left:451.1px;transform:scaleX(0.8407);top:588px">Acquittements</div>
<div class="rb" style="left:539.5px;top:589px"></div>
<div class="a ms" style="left:559.5px;transform:scaleX(0.8408);top:588px">Défilement Auto</div>
<svg style="left:656px;top:587px" width="16" height="17" viewBox="0 0 16 17"><path d="M5.5 2.5 V1.2 H10 V2.5" fill="none" stroke="#3a3e48" stroke-width="1.4"/><rect x="0.8" y="2.6" width="14" height="2.2" fill="#3a3e48"/><path d="M2.3 6 H13.3 V14.5 a1.5 1.5 0 0 1 -1.5 1.5 H3.8 a1.5 1.5 0 0 1 -1.5 -1.5 Z" fill="#3a3e48"/><path d="M6 8.5 V13.5 M9.6 8.5 V13.5" stroke="#fff" stroke-width="1.3"/></svg>
<div class="a ms" style="left:679.9px;transform:scaleX(0.8445);top:588px">Effacer Log</div>
<svg style="left:756px;top:586px" width="18" height="18" viewBox="0 0 18 18"><path d="M5.5 4 V2.5 a1 1 0 0 1 1 -1 H14.5 a1.5 1.5 0 0 1 1.5 1.5 V12 a1 1 0 0 1 -1 1 H13" fill="none" stroke="#00a2d2" stroke-width="1.5"/><path d="M1.2 5.2 a1 1 0 0 1 1 -1 H8.5 L12 7.8 V15.8 a1 1 0 0 1 -1 1 H2.2 a1 1 0 0 1 -1 -1 Z" fill="#fff" stroke="#3a3e48" stroke-width="1.5"/><circle cx="13.6" cy="4" r="0.9" fill="#00a2d2"/></svg>
<div class="a ms" style="left:778.7px;transform:scaleX(0.8472);top:588px">Copier</div>
<div class="a" style="left:1903px;top:607px;width:15px;height:410px;background:#f0f0f0"></div>
<div class="a" style="left:1918px;top:581px;width:2px;height:437px;background:linear-gradient(90deg,#8a8a8a,#5a5a5a)"></div>
<div class="a" style="left:1903px;top:623px;width:15px;height:376px;background:#cdcdcd"></div>
<svg style="left:1905px;top:611px" width="11" height="9"><path d="M2.5 6.8 L5.3 3.4 L8.1 6.8" fill="none" stroke="#555" stroke-width="2"/></svg>
<svg style="left:1905px;top:1004px" width="11" height="9"><path d="M2.5 2.6 L5.3 6 L8.1 2.6" fill="none" stroke="#555" stroke-width="2"/></svg>
<div class="a" style="left:0;top:1017px;width:1920px;height:1px;background:#696969"></div>
<div class="a" style="left:0;top:1018px;width:1920px;height:3px;background:#f0f0f0"></div><div class="a" style="left:1904px;top:1018px;width:16px;height:20px;background:#f0f0f0"></div><div class="a" style="left:0;top:1018px;width:1px;height:20px;background:#f0f0f0"></div>
<div class="a t12" style="left:4px;top:1023px;letter-spacing:-0.18px">Connecté: Kobra Neo</div>
<div class="a t12" style="left:769px;top:1023px;letter-spacing:-0.125px">Extrudeur: 24,4°C/Off Plateau: 19,4°C/Off</div>
<div class="a t12" style="left:1638px;top:1023px;letter-spacing:-0.19px">Au repos</div>
<div class="a" style="left:1690px;top:1021px;width:214px;height:15px;background:#e6e6e6;border:1px solid #bcbcbc"></div>
</body></html>
